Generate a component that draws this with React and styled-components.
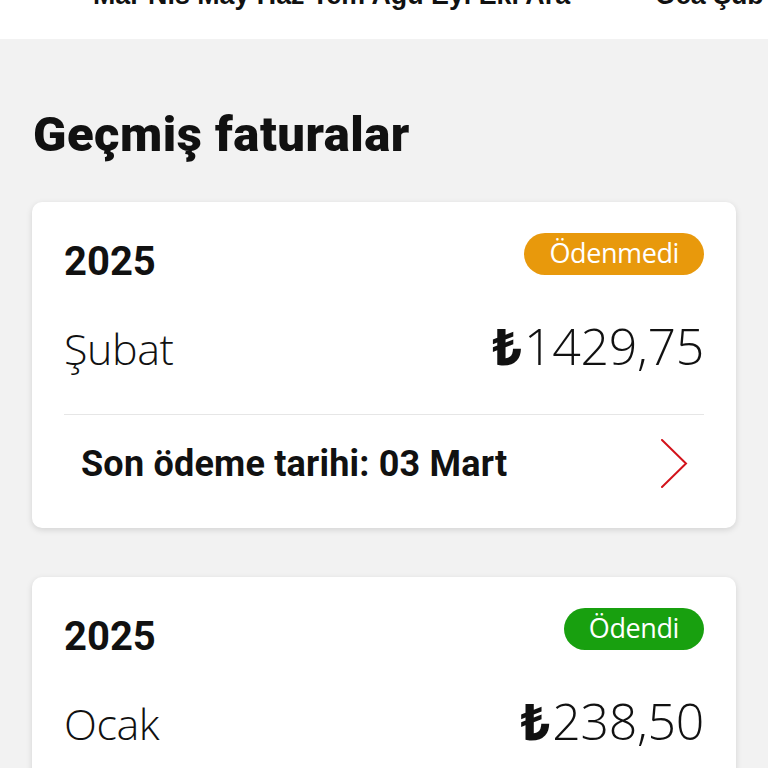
import React from "react";
import styled, { createGlobalStyle } from "styled-components";

const Global = createGlobalStyle`
  html, body { margin: 0; padding: 0; background: #f2f2f2; }
  body { font-family: Roboto, "Liberation Sans", sans-serif; color: #111; }
`;

const Page = styled.div`
  width: 768px;
  min-height: 768px;
  background: #f2f2f2;
  overflow: hidden;
`;

const MonthStrip = styled.div`
  height: 39px;
  background: #fff;
  overflow: hidden;
  display: flex;
  align-items: flex-start;
  padding-left: 93px;
  gap: 85px;
`;

const MonthGroup = styled.span`
  display: block;
  margin-top: -19px;
  font-family: "Liberation Sans", Arial, sans-serif;
  font-weight: 700;
  font-size: 26.8px;
  line-height: 28px;
  white-space: nowrap;
  color: #111;
`;

const Section = styled.section`
  padding: 68px 32px 0 32px;
  display: flex;
  flex-direction: column;
`;

const Title = styled.h1`
  margin: 0 0 39px 1px;
  font-family: Roboto, sans-serif;
  font-weight: 900;
  font-size: 49px;
  line-height: 56px;
  color: #111;
  letter-spacing: 0.5px;
`;

const CardList = styled.div`
  display: flex;
  flex-direction: column;
  gap: 49px;
`;

const Card = styled.article`
  background: #fff;
  border-radius: 10px;
  box-shadow: 0 2px 6px rgba(0, 0, 0, 0.13);
  padding: 31px 32px 39px;
  display: flex;
  flex-direction: column;
`;

const TopRow = styled.div`
  display: flex;
  justify-content: space-between;
  align-items: flex-start;
`;

const Year = styled.div`
  margin-top: 5px;
  font-family: Roboto, sans-serif;
  font-weight: 700;
  font-size: 40px;
  line-height: 48px;
  color: #111;
`;

const Badge = styled.span`
  display: inline-flex;
  align-items: center;
  justify-content: center;
  height: 42px;
  padding: 0 25px 3px;
  box-sizing: border-box;
  border-radius: 21px;
  background: ${(p) => (p.$paid ? "#18a00f" : "#e8990c")};
  color: #fff;
  font-family: "Open Sans", "Noto Sans", sans-serif;
  font-weight: 400;
  font-size: 27px;
  letter-spacing: -0.4px;
  line-height: 1;
`;

const AmountRow = styled.div`
  display: flex;
  justify-content: space-between;
  align-items: baseline;
  margin-top: 28px;
  padding-bottom: 33px;
  border-bottom: 1px solid #e6e6e6;
  font-family: "Open Sans", "Noto Sans", sans-serif;
  line-height: 64px;
  color: #111;
`;

const Month = styled.span`
  font-size: 43px;
  font-weight: 300;
  letter-spacing: -0.4px;
`;

const Amount = styled.span`
  font-size: 50px;
  font-weight: 300;
  letter-spacing: -0.3px;
`;

const Lira = styled.span`
  font-size: 50px;
  font-weight: 800;
  margin-right: 3px;
`;

const Footer = styled.button`
  display: flex;
  justify-content: space-between;
  align-items: center;
  padding: 24px 16px 0 17px;
  border: 0;
  background: none;
  font: inherit;
  text-align: left;
  cursor: pointer;
`;

const DueText = styled.span`
  font-family: Roboto, sans-serif;
  font-weight: 700;
  font-size: 36px;
  letter-spacing: 0.2px;
  color: #111;
`;

const Chevron = () => (
  <svg width="28" height="50" viewBox="0 0 28 50" aria-hidden="true">
    <polyline
      points="2,1 26,24.5 2,48"
      fill="none"
      stroke="#d3131b"
      strokeWidth="2"
      strokeLinecap="round"
      strokeLinejoin="miter"
    />
  </svg>
);

const bills = [
  { year: "2025", month: "Şubat", amount: "1429,75", paid: false, due: "03 Mart" },
  { year: "2025", month: "Ocak", amount: "238,50", paid: true, due: "03 Şubat" },
];

export default function App() {
  return (
    <Page>
      <Global />
      <MonthStrip>
        <MonthGroup>Mar Nis May Haz Tem Ağu Eyl Eki Ara</MonthGroup>
        <MonthGroup>Oca Şub</MonthGroup>
      </MonthStrip>
      <Section>
        <Title>Geçmiş faturalar</Title>
        <CardList>
          {bills.map((b, i) => (
            <Card key={i}>
              <TopRow>
                <Year>{b.year}</Year>
                <Badge $paid={b.paid}>{b.paid ? "Ödendi" : "Ödenmedi"}</Badge>
              </TopRow>
              <AmountRow>
                <Month>{b.month}</Month>
                <Amount>
                  <Lira>₺</Lira>
                  {b.amount}
                </Amount>
              </AmountRow>
              <Footer>
                <DueText>Son ödeme tarihi: {b.due}</DueText>
                <Chevron />
              </Footer>
            </Card>
          ))}
        </CardList>
      </Section>
    </Page>
  );
}
